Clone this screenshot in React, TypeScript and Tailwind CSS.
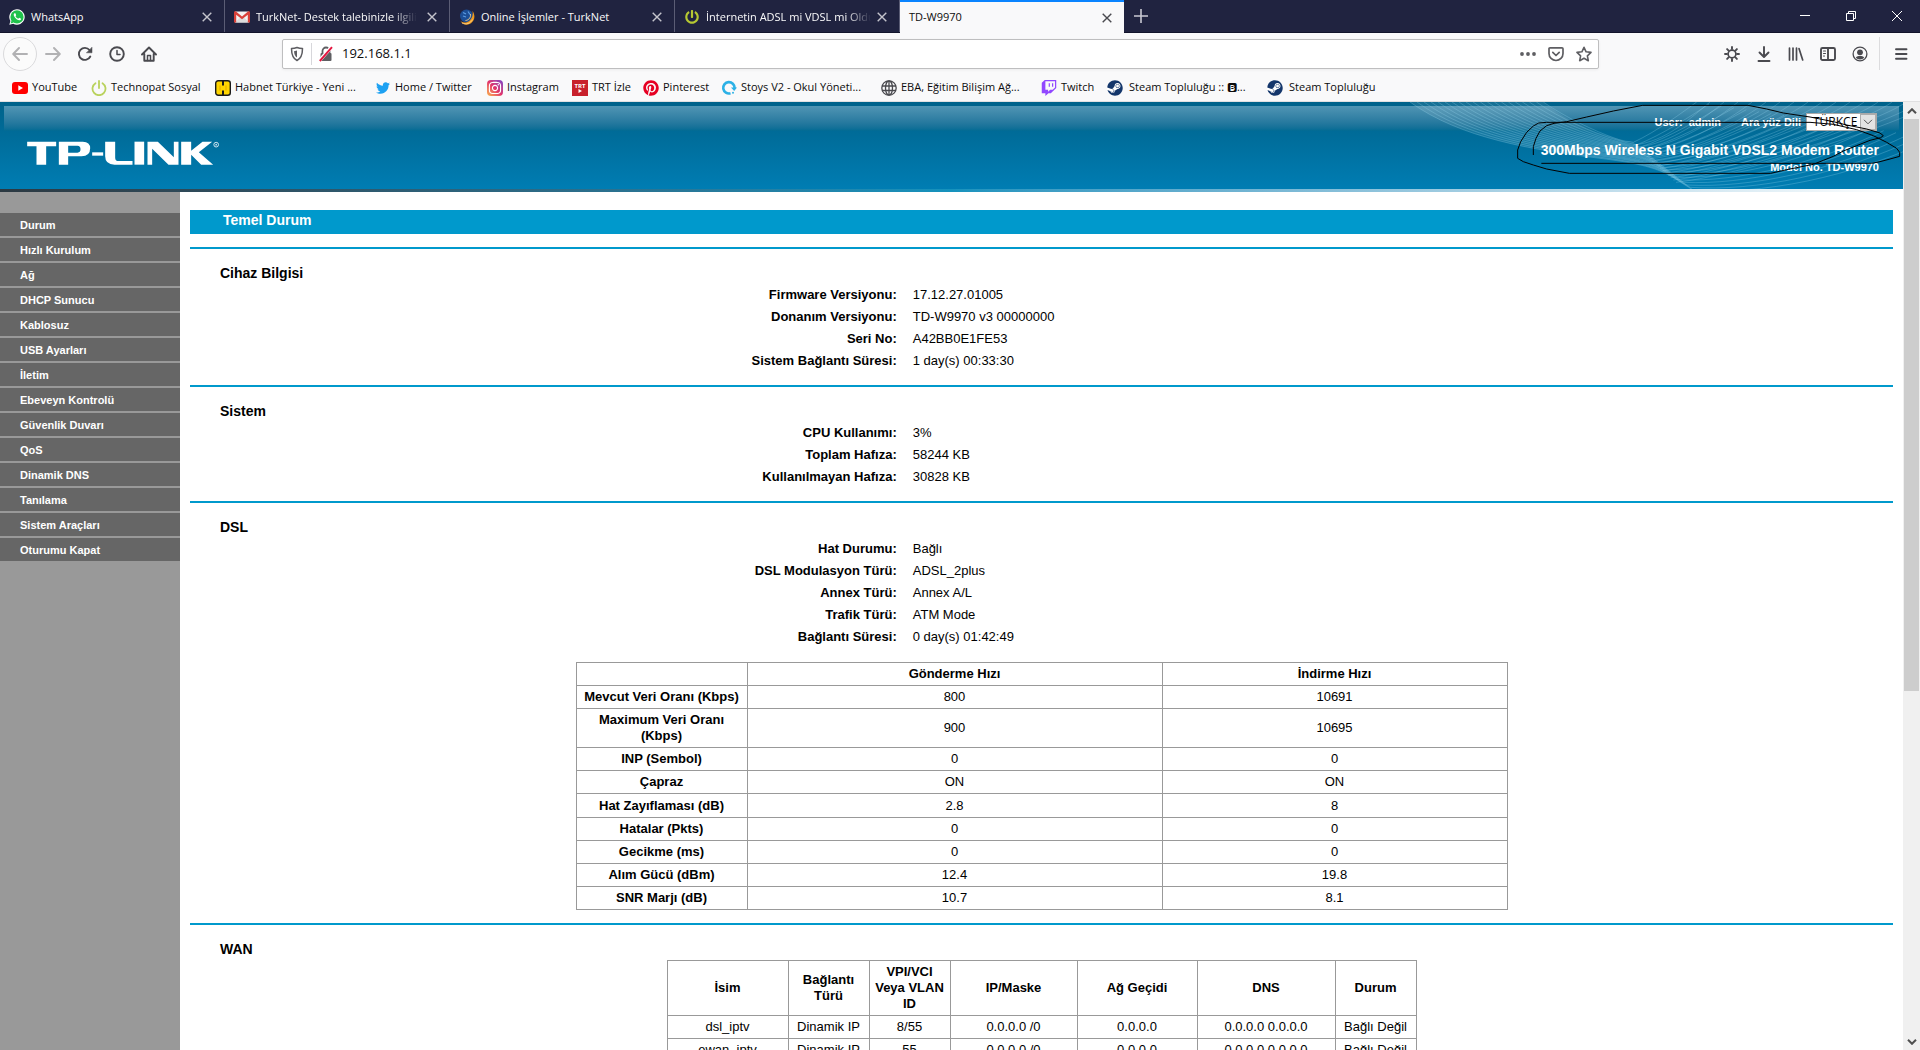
import React from "react";
import {
  FaPowerOff,
  FaTwitter,
  FaPinterest,
  FaInstagram,
  FaTwitch,
  FaSteam,
} from "react-icons/fa";

/* ---------- favicons ---------- */

const WhatsappIcon = () => (
  <svg viewBox="0 0 16 16" className="size-4 shrink-0">
    <path d="M.3 15.8 1.4 12A7.7 7.7 0 1 1 4.2 14.7Z" fill="#fff" />
    <circle cx="8" cy="7.9" r="6.6" fill="#1fc14b" />
    <path d="m1.6 14.5 1-3.3 2.2 2.3Z" fill="#1fc14b" />
    <path
      d="M5.4 4.3c-1 .8-.9 2.2.4 4 1.400 2 3.200 3.100 4.700 3 1-.1 1.600-.8 1.600-1.600l-1.900-1-.9 1c-1.300-.4-2.200-1.300-2.800-2.500l.7-.9-.8-2Z"
      fill="#fff"
    />
  </svg>
);

const GmailIcon = () => (
  <svg viewBox="0 0 16 16" className="size-4 shrink-0">
    <path d="M1 2.500h14v11H1z" fill="#f3f3f3" />
    <path d="M1 13.500 6.500 8 8 9.300 9.500 8l5.500 5.500Z" fill="#dcdcdc" />
    <path
      d="M0 3.500C0 2.300 1.200 2 2 2.600L8 7.500l6-4.900c.8-.6 2-.3 2 .9v10h-2.200V5.700L8 10.300 2.200 5.700v7.800H0Z"
      fill="#d8413a"
    />
  </svg>
);

const TurknetIcon = () => (
  <svg viewBox="0 0 16 16" className="size-4 shrink-0">
    <circle cx="7.500" cy="7" r="6.500" fill="#1c4e96" />
    <path d="M4 3.500 7 5M9 2.500l2 3M4 7l3 1" stroke="#5d9be0" strokeWidth="1.200" />
    <path
      d="M13.500 2c3 4 2.400 9.500-1.500 12.300-3.500 2.500-8 1.500-10.500-2 3 1.700 6.500 1.600 9-.6 2.500-2.200 3.800-5.700 3-9.700Z"
      fill="#f09a1e"
    />
    <path d="M11.500 5c.6 3-1.500 6.300-5 6.500M3 14c4 2 8.500.5 10.500-3.500" stroke="#ffd083" strokeWidth=".9" fill="none" />
  </svg>
);

const PowerTabIcon = () => <FaPowerOff className="mx-px size-3.5 shrink-0 text-[#b5c832]" />;
const PowerIcon = () => (
  <svg viewBox="0 0 16 16" className="size-4 shrink-0" fill="none" stroke="#b9d25c" strokeWidth="1.800" strokeLinecap="round">
    <path d="M4.500 3.200a6.500 6.500 0 1 0 7 0M8 1v7" />
  </svg>
);

const YoutubeIcon = () => (
  <svg viewBox="0 0 16 16" className="size-4 shrink-0">
    <rect y="2" width="16" height="12" rx="3" fill="#f00" />
    <path d="M6.300 5.200v5.600L11 8Z" fill="#fff" />
  </svg>
);

const HabnetIcon = () => (
  <svg viewBox="0 0 16 16" className="size-4 shrink-0">
    <rect x=".7" y=".7" width="14.600" height="14.600" rx="2.500" fill="#ffd500" stroke="#1a1a1a" strokeWidth="1.400" />
    <path d="M8 1v4.500M8 15v-4.500" stroke="#1a1a1a" strokeWidth="2" />
    <path d="M5 5.500v5M11 5.500v5" stroke="#e6a800" strokeWidth="1" />
  </svg>
);

const InstagramIcon = () => (
  <span className="flex size-4 shrink-0 items-center justify-center rounded-[4px] bg-linear-to-tr from-[#f9b042] via-[#e1306c] to-[#7a3bc9]">
    <FaInstagram className="size-3.5 text-white" />
  </span>
);

const TrtIcon = () => (
  <span className="flex size-4 shrink-0 flex-col items-center justify-center bg-[#c8202c] text-[6px] leading-[6px] font-bold text-white">
    <span>TRT</span>
    <svg viewBox="0 0 4 4" className="size-1" fill="#fff">
      <path d="M.5 0v4L4 2Z" />
    </svg>
  </span>
);

const StoysIcon = () => (
  <svg viewBox="0 0 16 16" className="size-4 shrink-0">
    <path d="M9.500 13.300A5.700 5.700 0 1 1 13.600 8" fill="none" stroke="#2cb1e6" strokeWidth="2.600" />
    <path d="M10 7.500h6L13.200 11Z" fill="#2cb1e6" />
    <circle cx="12" cy="12.800" r="1" fill="#2cb1e6" />
  </svg>
);

const GlobeIcon = () => (
  <svg viewBox="0 0 16 16" className="size-4 shrink-0" fill="none" stroke="#4a4a4f" strokeWidth="1.300">
    <circle cx="8" cy="8" r="7.200" />
    <ellipse cx="8" cy="8" rx="3.500" ry="7.200" />
    <path d="M8 1v14M1 6h14M1 10.500h14" />
  </svg>
);

const SteamIcon = () => (
  <span className="mr-0.5 flex size-4 shrink-0 items-center justify-center rounded-full bg-white">
    <FaSteam className="size-4 text-[#14366b]" />
  </span>
);

/* ---------- browser chrome ---------- */

const CloseGlyph = () => (
  <svg viewBox="0 0 10 10" className="size-2.5" stroke="currentColor" strokeWidth="1.400" fill="none">
    <path d="M.7.700l8.600 8.600M9.300.700.700 9.300" />
  </svg>
);

const plainTitle = "whitespace-nowrap";
const fadedTitle = "min-w-0 overflow-hidden mask-r-from-85% whitespace-nowrap";

const tabs = [
  { title: "WhatsApp", icon: <WhatsappIcon />, style: plainTitle },
  { title: "TurkNet- Destek talebinizle ilgili", icon: <GmailIcon />, style: fadedTitle },
  { title: "Online İşlemler - TurkNet", icon: <TurknetIcon />, style: plainTitle },
  { title: "İnternetin ADSL mi VDSL mi Olduğunu", icon: <PowerTabIcon />, style: fadedTitle },
];

const TabStrip = () => (
  <div className="flex h-[33px] items-stretch border-b border-[#12142b] bg-[#202340] text-[#f9f9fa]">
    {tabs.map((tab) => (
      <div key={tab.title} className="flex w-[225px] items-center border-r border-[#5b5d75] pt-0.5 pr-3 pl-[9px]">
        <button className="flex min-w-0 flex-1 items-center gap-1.5 text-left">
          {tab.icon}
          <span className={tab.style}>{tab.title}</span>
        </button>
        <button aria-label={"Kapat: " + tab.title} className="ml-1.5 text-[#c4c4cc]">
          <CloseGlyph />
        </button>
      </div>
    ))}
    <div className="-mb-px flex w-[224px] items-center border-t-2 border-[#0a84ff] bg-[#f9f9fa] pr-3 pl-[9px] text-[#0c0c0d]">
      <button className="flex-1 text-left">TD-W9970</button>
      <button aria-label="Kapat: TD-W9970" className="text-[#4a4a4f]">
        <CloseGlyph />
      </button>
    </div>
    <button aria-label="Yeni sekme" className="flex w-[34px] items-center justify-center">
      <svg viewBox="0 0 14 14" className="size-3.5" stroke="#c9c9d2" strokeWidth="1.600">
        <path d="M7 0v14M0 7h14" />
      </svg>
    </button>
    <div className="ml-auto flex">
      <button aria-label="Küçült" className="flex w-[46px] items-center justify-center">
        <svg viewBox="0 0 10 10" className="size-2.5" stroke="#fff">
          <path d="M0 4.500h10" />
        </svg>
      </button>
      <button aria-label="Geri yükle" className="flex w-[46px] items-center justify-center">
        <svg viewBox="0 0 10 10" className="size-2.5" stroke="#fff" fill="none">
          <path d="M.5 2.500h7v7h-7zM2.500 2.500v-2h7v7h-2" />
        </svg>
      </button>
      <button aria-label="Pencereyi kapat" className="flex w-[46px] items-center justify-center">
        <svg viewBox="0 0 10 10" className="size-2.5" stroke="#fff">
          <path d="M0 0l10 10M10 0 0 10" />
        </svg>
      </button>
    </div>
  </div>
);

const ToolButton = ({ label, children }: { label: string; children: React.ReactNode }) => (
  <button aria-label={label} className="flex w-8 items-center justify-center text-[#4a4a4f]">
    <svg
      viewBox="0 0 16 16"
      className="size-4"
      fill="none"
      stroke="currentColor"
      strokeWidth="1.900"
      strokeLinecap="round"
      strokeLinejoin="round"
    >
      {children}
    </svg>
  </button>
);

const NavBar = () => (
  <div className="flex h-[41px] items-center pl-[3px]">
    <div className="flex">
      <button
        aria-label="Geri"
        className="flex size-[34px] items-center justify-center rounded-full border border-[#dadadc] bg-[#fbfbfb]"
      >
        <svg viewBox="0 0 16 16" className="size-4" fill="none" stroke="#b1b1b3" strokeWidth="1.900" strokeLinecap="round" strokeLinejoin="round">
          <path d="M15 8H1.500M7 2 1.200 8 7 14" />
        </svg>
      </button>
      <ToolButton label="İleri">
        <path d="M1 8h13.500M9 2l5.800 6L9 14" stroke="#b1b1b3" />
      </ToolButton>
      <ToolButton label="Yenile">
        <path d="M13.300 10.500A6 6 0 1 1 12.500 4" />
        <path d="M15 1.500v5.300H9.700Z" fill="currentColor" strokeWidth=".5" />
      </ToolButton>
      <ToolButton label="Geçmiş">
        <circle cx="8" cy="8" r="6.800" />
        <path d="M8 4.500V8.500h3" strokeWidth="1.500" />
      </ToolButton>
      <ToolButton label="Giriş sayfası">
        <path d="M1 8.500 8 1.500l7 7M3.300 8v6.700h9.400V8" />
        <path d="M6.500 14.500v-5h3v5" strokeWidth="1.500" />
      </ToolButton>
    </div>
    <div className="mr-[117px] ml-[117px] flex h-[30px] flex-1 items-center rounded-[2px] border border-[#bebebf] bg-white px-1.5 text-[#4a4a4f] shadow-[0_1px_3px_rgba(0,0,0,0.06)]">
      <svg viewBox="0 0 16 16" className="size-4" fill="none" stroke="#5e5e62" strokeWidth="1.500">
        <path d="M8 1.500c2 .8 3.700 1 5.500 1 0 6.500-1.500 10-5.500 12-4-2-5.500-5.500-5.500-12 1.800 0 3.500-.2 5.500-1Z" strokeLinejoin="round" />
        <path d="M8 4.500v7c-2-1.300-2.800-3.500-3-6.300Z" fill="#5e5e62" stroke="none" />
      </svg>
      <span className="ml-1.5 h-5.5 w-px bg-[#d7d7db]" />
      <svg viewBox="0 0 16 16" className="ml-1.5 size-4" fill="none">
        <path d="M4.500 7V5a3.500 3.500 0 0 1 7 0v2" stroke="#5e5e62" strokeWidth="1.800" />
        <rect x="2.500" y="7" width="11" height="8" rx="1" fill="#5e5e62" />
        <path d="M1.200 14.800 13.500 1" stroke="#fff" strokeWidth="3.500" />
        <path d="M1.800 15 14 1.200" stroke="#e4153f" strokeWidth="1.900" />
      </svg>
      <input
        aria-label="Adres"
        defaultValue="192.168.1.1"
        className="ml-2 min-w-0 flex-1 bg-transparent text-[13px] text-[#0c0c0d] outline-none"
      />
      <button aria-label="Sayfa eylemleri" className="flex w-7 items-center justify-center">
        <svg viewBox="0 0 16 16" className="size-4" fill="#5e5e62">
          <circle cx="2" cy="8" r="1.900" />
          <circle cx="8" cy="8" r="1.900" />
          <circle cx="14" cy="8" r="1.900" />
        </svg>
      </button>
      <button aria-label="Pocket'e kaydet" className="flex w-7 items-center justify-center">
        <svg viewBox="0 0 16 16" className="size-4" fill="none" stroke="#5e5e62" strokeWidth="1.700" strokeLinecap="round" strokeLinejoin="round">
          <path d="M2 1.800h12c.7 0 1 .3 1 1V7.500a7 7 0 0 1-14 0V2.800c0-.7.300-1 1-1ZM4.800 6.300 8 9.500l3.200-3.200" />
        </svg>
      </button>
      <button aria-label="Yer imlerine ekle" className="-mr-1.5 flex w-7 items-center justify-center">
        <svg viewBox="0 0 16 16" className="size-4" fill="none" stroke="#5e5e62" strokeWidth="1.600" strokeLinejoin="round">
          <path d="m8 1.300 2.100 4.500 4.900.6-3.600 3.400.9 4.900L8 12.300l-4.300 2.400.9-4.900L1 6.400l4.900-.6Z" />
        </svg>
      </button>
    </div>
    <div className="flex">
      <ToolButton label="Ayarlar">
        <circle cx="8" cy="8" r="3.900" strokeWidth="1.700" />
        <path d="M8 1v2M8 13v2M1 8h2M13 8h2M3.100 3.100l1.500 1.500M11.400 11.400l1.500 1.500M3.100 12.900l1.500-1.500M11.400 4.600l1.500-1.500" />
      </ToolButton>
      <ToolButton label="İndirilenler">
        <path d="M8 1v9.500M3.500 6.500 8 11l4.500-4.500M2.500 15h11" />
      </ToolButton>
      <ToolButton label="Kitaplık">
        <path d="M1.500 2v12M5 2v12M8.500 2v12M11 2.500l3.700 11.500" strokeWidth="1.700" />
      </ToolButton>
      <ToolButton label="Kenar çubuğu">
        <rect x="1" y="2" width="14" height="12" rx="1.500" />
        <path d="M8 2v12" />
        <path d="M3.500 5h2M3.500 7.500h2M3.500 10h1" strokeWidth="1.100" />
      </ToolButton>
      <ToolButton label="Hesap">
        <circle cx="8" cy="8" r="6.900" strokeWidth="1.300" />
        <circle cx="8" cy="6.300" r="2.900" fill="currentColor" stroke="none" />
        <path d="M3.800 11.500c1-1.500 2.500-1.500 4.200-1.500s3.200 0 4.200 1.500C11 13 9.800 13.400 8 13.400S5 13 3.800 11.500Z" fill="currentColor" stroke="none" />
      </ToolButton>
    </div>
    <span className="ml-[3px] h-[33px] w-px bg-[#dcdcde]" />
    <div className="mr-[3px] ml-[5px] flex">
      <ToolButton label="Menü">
        <path d="M3 3.200h10.500M3 8h10.500M3 12.800h10.500" />
      </ToolButton>
    </div>
  </div>
);

const bookmarks = [
  { label: "YouTube", icon: <YoutubeIcon />, width: "w-[79px]" },
  { label: "Technopat Sosyal", icon: <PowerIcon />, width: "w-[124px]" },
  { label: "Habnet Türkiye - Yeni ...", icon: <HabnetIcon />, width: "w-[161px]" },
  { label: "Home / Twitter", icon: <FaTwitter className="mr-px size-3.5 shrink-0 text-[#1da1f2]" />, width: "w-[111px]" },
  { label: "Instagram", icon: <InstagramIcon />, width: "w-[85px]" },
  { label: "TRT İzle", icon: <TrtIcon />, width: "w-[71px]" },
  { label: "Pinterest", icon: <FaPinterest className="size-4 shrink-0 text-[#e60023]" />, width: "w-[78px]" },
  { label: "Stoys V2 - Okul Yöneti...", icon: <StoysIcon />, width: "w-[160px]" },
  { label: "EBA, Eğitim Bilişim Ağ...", icon: <GlobeIcon />, width: "w-[160px]" },
  { label: "Twitch", icon: <FaTwitch className="size-4 shrink-0 text-[#9147ff]" />, width: "w-[66px]" },
  { label: "Steam Topluluğu :: 🅱...", icon: <SteamIcon />, width: "w-[160px]" },
  { label: "Steam Topluluğu", icon: <SteamIcon />, width: "w-[120px]" },
];

const BookmarksBar = () => (
  <nav aria-label="Yer imleri" className="flex h-[27px] items-center pl-3 text-[#0c0c0d]">
    {bookmarks.map((b) => (
      <a key={b.label} href="#bookmark" className={"flex shrink-0 items-center gap-1 whitespace-nowrap " + b.width}>
        {b.icon}
        <span>{b.label}</span>
      </a>
    ))}
  </nav>
);

/* ---------- router page ---------- */

const waveCurves = Array.from({ length: 20 }, (_, i) => {
  const t = i / 19;
  const mix = (a: number, b: number) => Math.round(a + (b - a) * t);
  return (
    `M${mix(30, 430)} 21` +
    `C${mix(180, 500)} ${mix(130, 70)} ${mix(400, 590)} ${mix(165, 110)} ${mix(600, 640)} ${mix(190, 128)}` +
    `S${mix(800, 670)} ${mix(240, 135)} ${mix(880, 700)} ${mix(285, 142)}` +
    `C${mix(1080, 770)} ${mix(300, 110)} ${mix(1350, 850)} ${mix(250, 50)} ${mix(1600, 890)} ${mix(130, 21)}`
  );
});

const risingCurves = Array.from({ length: 17 }, (_, i) => {
  const x = 930 + i * 42;
  return `M${700 + i * 8} ${150 + i * 7}C${800 + i * 16} ${140 + i * 6} ${x - 60} 70 ${x} 21`;
});

const HeaderWaves = () => (
  <svg viewBox="0 21 1509 261" className="absolute top-0 right-0 h-[87px] w-[503px]" fill="none" aria-hidden="true">
    <path d="M30 21C180 130 400 165 600 190S800 240 880 285L700 142Q540 110 430 21Z" fill="#fff" fillOpacity=".09" />
    {waveCurves.map((d) => (
      <path key={d} d={d} stroke="#9fdcf2" strokeOpacity=".32" strokeWidth="2.500" />
    ))}
    {risingCurves.map((d) => (
      <path key={d} d={d} stroke="#9fdcf2" strokeOpacity=".3" strokeWidth="2.500" />
    ))}
  </svg>
);

/* Freehand pen stroke circling the product name */
const PenMark = () => (
  <svg
    viewBox="0 21 1509 261"
    className="pointer-events-none absolute top-0 right-0 h-[87px] w-[503px]"
    fill="none"
    stroke="#000"
    strokeWidth="3"
    aria-hidden="true"
  >
    <path d="M400 180V155L408 130 420 108 440 92 462 85 500 80 560 66 640 48 728 31H1044L1100 42 1150 54 1230 66 1300 80 1340 90 1400 102 1440 114 1450 122 1442 128 1410 136 1370 152 1330 168 1300 184 1270 196 1240 208 1160 224 1112 235H508L440 222 400 210 370 200 353 190V165L362 140 380 112 400 93 416 84 440 82H1230L1300 88 1370 104 1420 122 1460 142 1490 160 1499 172V184L1470 192 1440 200 1415 205H424" />
  </svg>
);

const Logo = () => (
  <svg viewBox="2 4 578 72" className="absolute top-[39px] left-[27px] h-6 w-[193px]" role="img" aria-label="TP-LINK">
    <g fill="#fff">
      <path d="M2 6h87v14H59v55H30V20H2Z" />
      <path d="M97 6h72q22 0 22 20 0 24-26 24h-40v25H97Zm28 12v21h28q9 0 9-10 0-11-9-11Z" fillRule="evenodd" />
      <path d="M197 38h33v10h-33Z" />
      <path d="M236 6h30v48q0 10 10 10h42v11h-54q-28 0-28-25Z" />
      <path d="M324 6h29v69h-29Z" />
      <path d="M363 6h31l48 47V6h14v69h-30L377 27v48h-14Z" />
      <path d="M464 6h30v27l34-27h29l-40 32 43 37h-36l-30-30v30h-30Z" />
    </g>
    <circle cx="569" cy="15" r="7" fill="none" stroke="#cfe6f1" strokeWidth="3" />
    <circle cx="569" cy="15" r="2.500" fill="#cfe6f1" />
  </svg>
);

const RouterHeader = () => (
  <header className="relative h-[90px] shrink-0 text-white">
    <div className="h-[87px] bg-linear-to-b from-[#00628a] to-[#007db3] pt-1 pl-1">
      <div className="mr-1 h-[25px] bg-linear-to-b from-[#5095b4] to-[#006b94]" />
    </div>
    <HeaderWaves />
    <div className="h-[3px] bg-linear-to-r from-[#2c3942] via-[#1592bd] to-white" />
    <Logo />
    <div className="absolute top-2.5 right-6 flex flex-col items-end font-bold">
      <div className="mr-0.5 flex h-5 items-center text-[11px]">
        <span className="whitespace-pre">User:  admin</span>
        <label htmlFor="lang" className="ml-5">
          Ara yüz Dili
        </label>
        <div className="relative ml-[5px] flex">
          <select
            id="lang"
            defaultValue="tr"
            className="h-[18px] w-[71px] appearance-none border border-[#a9a9a9] bg-white pl-1.5 font-['Open_Sans',sans-serif] text-[12px] leading-4 font-normal text-black"
          >
            <option value="tr">TÜRKÇE</option>
            <option value="en">ENGLISH</option>
          </select>
          <span className="pointer-events-none absolute top-px right-px flex h-4 w-4 items-center justify-center border border-[#adadad] bg-[#e3e3e3]">
            <svg viewBox="0 0 10 6" className="h-1.5 w-2.5" fill="none" stroke="#555">
              <path d="m1 .8 4 4 4-4" />
            </svg>
          </span>
        </div>
      </div>
      <h1 className="mt-[9px] text-[14px] leading-[18px]">300Mbps Wireless N Gigabit VDSL2 Modem Router</h1>
      <p className="text-[11px] leading-4">Model No. TD-W9970</p>
    </div>
    <PenMark />
  </header>
);

const menu = [
  "Durum",
  "Hızlı Kurulum",
  "Ağ",
  "DHCP Sunucu",
  "Kablosuz",
  "USB Ayarları",
  "İletim",
  "Ebeveyn Kontrolü",
  "Güvenlik Duvarı",
  "QoS",
  "Dinamik DNS",
  "Tanılama",
  "Sistem Araçları",
  "Oturumu Kapat",
];

const Sidebar = () => (
  <nav aria-label="Menü" className="flex w-[180px] shrink-0 flex-col gap-0.5 bg-[#999] pt-[21px]">
    {menu.map((m) => (
      <a key={m} href="#menu" className="block h-[23px] bg-[#666] pl-5 text-[11px] leading-6 font-bold text-white">
        {m}
      </a>
    ))}
  </nav>
);

const Section = ({ title, children }: { title: string; children: React.ReactNode }) => (
  <section className="border-t-2 border-[#0099cc] pt-[14px] pb-[13px]">
    <h2 className="pl-[30px] text-[14px] leading-5 font-bold">{title}</h2>
    {children}
  </section>
);

const Fields = ({ rows }: { rows: [string, string][] }) => (
  <dl className="mt-px text-[13px] leading-[22px]">
    {rows.map(([k, v]) => (
      <div key={k} className="grid grid-cols-[41.5%_1fr] gap-x-4">
        <dt className="text-right font-bold">{k}</dt>
        <dd>{v}</dd>
      </div>
    ))}
  </dl>
);

const cell = "border border-[#999] px-[3px] text-center";

const rates: [string, string, string, string][] = [
  ["Mevcut Veri Oranı (Kbps)", "800", "10691", "h-[23px]"],
  ["Maximum Veri Oranı (Kbps)", "900", "10695", "h-[39px]"],
  ["INP (Sembol)", "0", "0", "h-[23px]"],
  ["Çapraz", "ON", "ON", "h-[23px]"],
  ["Hat Zayıflaması (dB)", "2.8", "8", "h-6"],
  ["Hatalar (Pkts)", "0", "0", "h-[23px]"],
  ["Gecikme (ms)", "0", "0", "h-[23px]"],
  ["Alım Gücü (dBm)", "12.4", "19.8", "h-[23px]"],
  ["SNR Marjı (dB)", "10.7", "8.1", "h-[23px]"],
];

const RateTable = () => (
  <table className="mx-auto mt-[14px] w-[932px] table-fixed border-collapse text-[13px] leading-4">
    <colgroup>
      <col className="w-[171px]" />
      <col className="w-[415px]" />
      <col />
    </colgroup>
    <thead>
      <tr className="h-[23px]">
        <td className={cell} />
        <th className={cell}>Gönderme Hızı</th>
        <th className={cell}>İndirme Hızı</th>
      </tr>
    </thead>
    <tbody>
      {rates.map(([name, up, down, height]) => (
        <tr key={name} className={height}>
          <th className={cell}>{name}</th>
          <td className={cell}>{up}</td>
          <td className={cell}>{down}</td>
        </tr>
      ))}
    </tbody>
  </table>
);

const wanHead = ["İsim", "Bağlantı Türü", "VPI/VCI Veya VLAN ID", "IP/Maske", "Ağ Geçidi", "DNS", "Durum"];
const wanRows = [
  ["dsl_iptv", "Dinamik IP", "8/55", "0.0.0.0 /0", "0.0.0.0", "0.0.0.0 0.0.0.0", "Bağlı Değil"],
  ["ewan_iptv", "Dinamik IP", "55", "0.0.0.0 /0", "0.0.0.0", "0.0.0.0 0.0.0.0", "Bağlı Değil"],
];

const WanTable = () => (
  <table className="mx-auto mt-px w-[750px] table-fixed border-collapse text-[13px] leading-4">
    <colgroup>
      <col className="w-[121px]" />
      <col className="w-[81px]" />
      <col className="w-[81px]" />
      <col className="w-[127px]" />
      <col className="w-[120px]" />
      <col className="w-[138px]" />
      <col />
    </colgroup>
    <thead>
      <tr className="h-[55px]">
        {wanHead.map((h) => (
          <th key={h} className={cell}>
            {h}
          </th>
        ))}
      </tr>
    </thead>
    <tbody>
      {wanRows.map((r) => (
        <tr key={r[0]} className="h-[23px]">
          {r.map((c, i) => (
            <td key={i} className={cell}>
              {c}
            </td>
          ))}
        </tr>
      ))}
    </tbody>
  </table>
);

const Scrollbar = () => (
  <div aria-hidden="true" className="flex w-[17px] shrink-0 flex-col bg-[#f0f0f0] px-px">
    <span className="flex h-[17px] items-center justify-center">
      <svg viewBox="0 0 10 6" className="h-1.5 w-2.5" fill="none" stroke="#505050" strokeWidth="2">
        <path d="m1 5.200 4-4 4 4" />
      </svg>
    </span>
    <span className="h-[60.3%] bg-[#cdcdcd]" />
    <span className="mt-auto flex h-[17px] items-center justify-center">
      <svg viewBox="0 0 10 6" className="h-1.5 w-2.5" fill="none" stroke="#505050" strokeWidth="2">
        <path d="m1 .8 4 4 4-4" />
      </svg>
    </span>
  </div>
);

export default function App() {
  return (
    <div className="flex h-screen flex-col overflow-hidden bg-white font-['Liberation_Sans',Arial,sans-serif] text-black">
      <div className="shrink-0 border-b border-[#e0e0e1] bg-[#f9f9fa] font-['Open_Sans',sans-serif] text-[11px]">
        <TabStrip />
        <NavBar />
        <BookmarksBar />
      </div>
      <div className="flex min-h-0 flex-1">
        <div className="flex min-w-0 flex-1 flex-col overflow-hidden">
          <RouterHeader />
          <div className="flex min-h-0 flex-1">
            <Sidebar />
            <main className="min-w-0 flex-1 overflow-hidden px-2.5 pt-[18px]">
              <h2 className="mb-[13px] h-6 bg-[#0099cc] pl-[33px] text-[14px] leading-5 font-bold text-white">
                Temel Durum
              </h2>
              <Section title="Cihaz Bilgisi">
                <Fields
                  rows={[
                    ["Firmware Versiyonu:", "17.12.27.01005"],
                    ["Donanım Versiyonu:", "TD-W9970 v3 00000000"],
                    ["Seri No:", "A42BB0E1FE53"],
                    ["Sistem Bağlantı Süresi:", "1 day(s) 00:33:30"],
                  ]}
                />
              </Section>
              <Section title="Sistem">
                <Fields
                  rows={[
                    ["CPU Kullanımı:", "3%"],
                    ["Toplam Hafıza:", "58244 KB"],
                    ["Kullanılmayan Hafıza:", "30828 KB"],
                  ]}
                />
              </Section>
              <Section title="DSL">
                <Fields
                  rows={[
                    ["Hat Durumu:", "Bağlı"],
                    ["DSL Modulasyon Türü:", "ADSL_2plus"],
                    ["Annex Türü:", "Annex A/L"],
                    ["Trafik Türü:", "ATM Mode"],
                    ["Bağlantı Süresi:", "0 day(s) 01:42:49"],
                  ]}
                />
                <RateTable />
              </Section>
              <Section title="WAN">
                <WanTable />
              </Section>
            </main>
          </div>
        </div>
        <Scrollbar />
      </div>
    </div>
  );
}
